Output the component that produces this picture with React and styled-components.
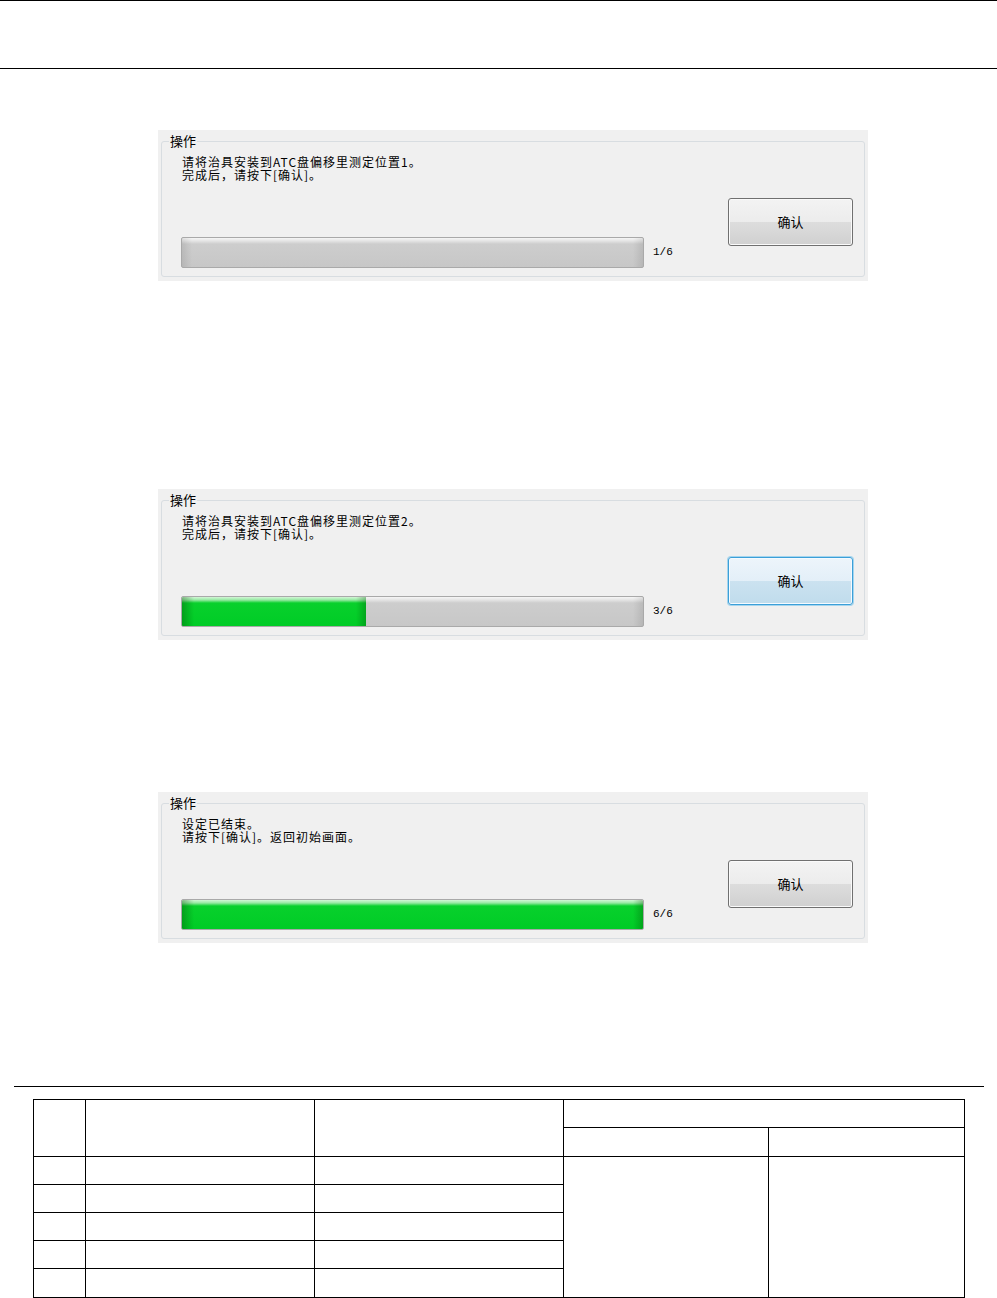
import React from "react";
import styled, { createGlobalStyle, css } from "styled-components";

const GlobalStyle = createGlobalStyle`
  html, body { margin: 0; padding: 0; background: #ffffff; }
  body { font-family: "Noto Sans CJK SC", "Noto Sans", sans-serif; color: #000; }
`;

const Page = styled.div`
  width: 997px;
  display: flex;
  flex-direction: column;
`;

const Header = styled.header`
  height: 67px;
  border-top: 1px solid #000;
  border-bottom: 1px solid #000;
`;

const Panel = styled.section`
  box-sizing: border-box;
  width: 710px;
  margin-left: 158px;
  margin-top: ${(p) => p.$gap}px;
  background: #f0f0f0;
  padding: 11px 3px 4px 3px;
`;

const GroupBox = styled.div`
  position: relative;
  border: 1px solid #d8dde1;
  border-radius: 3px;
  padding: 13px 11px 8px 19px;
`;

const Legend = styled.span`
  position: absolute;
  top: -9px;
  left: 7px;
  padding: 0 1px;
  background: #f0f0f0;
  font-size: 13px;
  line-height: 16px;
`;

const Content = styled.div`
  height: 113px;
  display: flex;
  justify-content: space-between;
`;

const LeftCol = styled.div`
  display: flex;
  flex-direction: column;
  justify-content: space-between;
`;

const Message = styled.div`
  margin-left: 1px;
  font-size: 12px;
  letter-spacing: 1px;
  line-height: 13px;
  white-space: nowrap;
`;

const BarRow = styled.div`
  display: flex;
  align-items: center;
  gap: 9px;
`;

const Bar = styled.div`
  box-sizing: border-box;
  width: 463px;
  height: 31px;
  border: 1px solid #a9a9a9;
  border-radius: 2px;
  overflow: hidden;
  display: flex;
  background:
    linear-gradient(to right, rgba(0,0,0,0.09), rgba(0,0,0,0) 10px, rgba(0,0,0,0) calc(100% - 10px), rgba(0,0,0,0.09)),
    linear-gradient(to bottom, #f6f6f6 0, #e4e4e4 3px, #cdcdcd 6px, #c7c7c7 100%);
`;

const Fill = styled.div`
  height: 100%;
  background:
    linear-gradient(to right, rgba(0,70,0,0.35), rgba(0,70,0,0) 12px, rgba(0,70,0,0) calc(100% - 10px), rgba(0,70,0,0.3)),
    linear-gradient(to bottom, #d2f7d6 0, #96e9a2 3px, #08d02c 6px, #00cc26 100%);
`;

const Count = styled.span`
  font-family: "Liberation Mono", monospace;
  font-size: 11px;
  line-height: 13px;
`;

const Button = styled.button`
  box-sizing: border-box;
  align-self: flex-end;
  margin-bottom: 22px;
  width: 125px;
  height: 48px;
  padding: 0 0 2px;
  font-family: "Noto Sans CJK SC", sans-serif;
  font-size: 13px;
  color: #000;
  border-radius: 3px;
  border: 1px solid #707070;
  background: linear-gradient(to bottom, #f3f3f3 0, #ececec 50%, #dddddd 50%, #d0d0d0 100%);
  box-shadow: inset 0 0 0 1px #fafafa;
  ${(p) =>
    p.$focused &&
    css`
      border: 1px solid #3c9fd8;
      background: linear-gradient(to bottom, #edf5fb 0, #e3eff8 50%, #cbe2f0 50%, #c0dcec 100%);
      box-shadow: 0 0 0 1px rgba(70, 180, 235, 0.45), inset 0 0 0 1px #f4faff;
    `}
`;

const Rule = styled.hr`
  margin: 143px 0 0 14px;
  width: 970px;
  height: 0;
  border: 0;
  border-top: 1px solid #000;
`;

const Grid = styled.div`
  margin: 12px 0 0 33px;
  width: fit-content;
  display: grid;
  grid-template-columns: 51px 228px 248px 204px 195px;
  grid-template-rows: 27px 28px 27px 27px 27px 27px 28px;
  gap: 1px;
  padding: 1px;
  background: #000;
`;

const Cell = styled.div`
  background: #fff;
  grid-column: ${(p) => p.$col};
  grid-row: ${(p) => p.$row};
`;

const panels = [
  {
    gap: 61,
    lines: ["请将治具安装到ATC盘偏移里测定位置1。", "完成后，请按下[确认]。"],
    count: "1/6",
    fill: 0,
    focused: false,
  },
  {
    gap: 208,
    lines: ["请将治具安装到ATC盘偏移里测定位置2。", "完成后，请按下[确认]。"],
    count: "3/6",
    fill: 0.4,
    focused: true,
  },
  {
    gap: 152,
    lines: ["设定已结束。", "请按下[确认]。返回初始画面。"],
    count: "6/6",
    fill: 1,
    focused: false,
  },
];

const cells = [
  { col: "1", row: "1 / 3" },
  { col: "2", row: "1 / 3" },
  { col: "3", row: "1 / 3" },
  { col: "4 / 6", row: "1" },
  { col: "4", row: "2" },
  { col: "5", row: "2" },
  ...[3, 4, 5, 6, 7].flatMap((r) => [
    { col: "1", row: String(r) },
    { col: "2", row: String(r) },
    { col: "3", row: String(r) },
  ]),
  { col: "4", row: "3 / 8" },
  { col: "5", row: "3 / 8" },
];

export default function App() {
  return (
    <Page>
      <GlobalStyle />
      <Header />
      {panels.map((p, i) => (
        <Panel key={i} $gap={p.gap}>
          <GroupBox>
            <Legend>操作</Legend>
            <Content>
              <LeftCol>
                <Message>
                  {p.lines.map((l, j) => (
                    <div key={j}>{l}</div>
                  ))}
                </Message>
                <BarRow>
                  <Bar>
                    <Fill style={{ width: `${p.fill * 100}%` }} />
                  </Bar>
                  <Count>{p.count}</Count>
                </BarRow>
              </LeftCol>
              <Button $focused={p.focused}>确认</Button>
            </Content>
          </GroupBox>
        </Panel>
      ))}
      <Rule />
      <Grid>
        {cells.map((c, i) => (
          <Cell key={i} $col={c.col} $row={c.row} />
        ))}
      </Grid>
    </Page>
  );
}
